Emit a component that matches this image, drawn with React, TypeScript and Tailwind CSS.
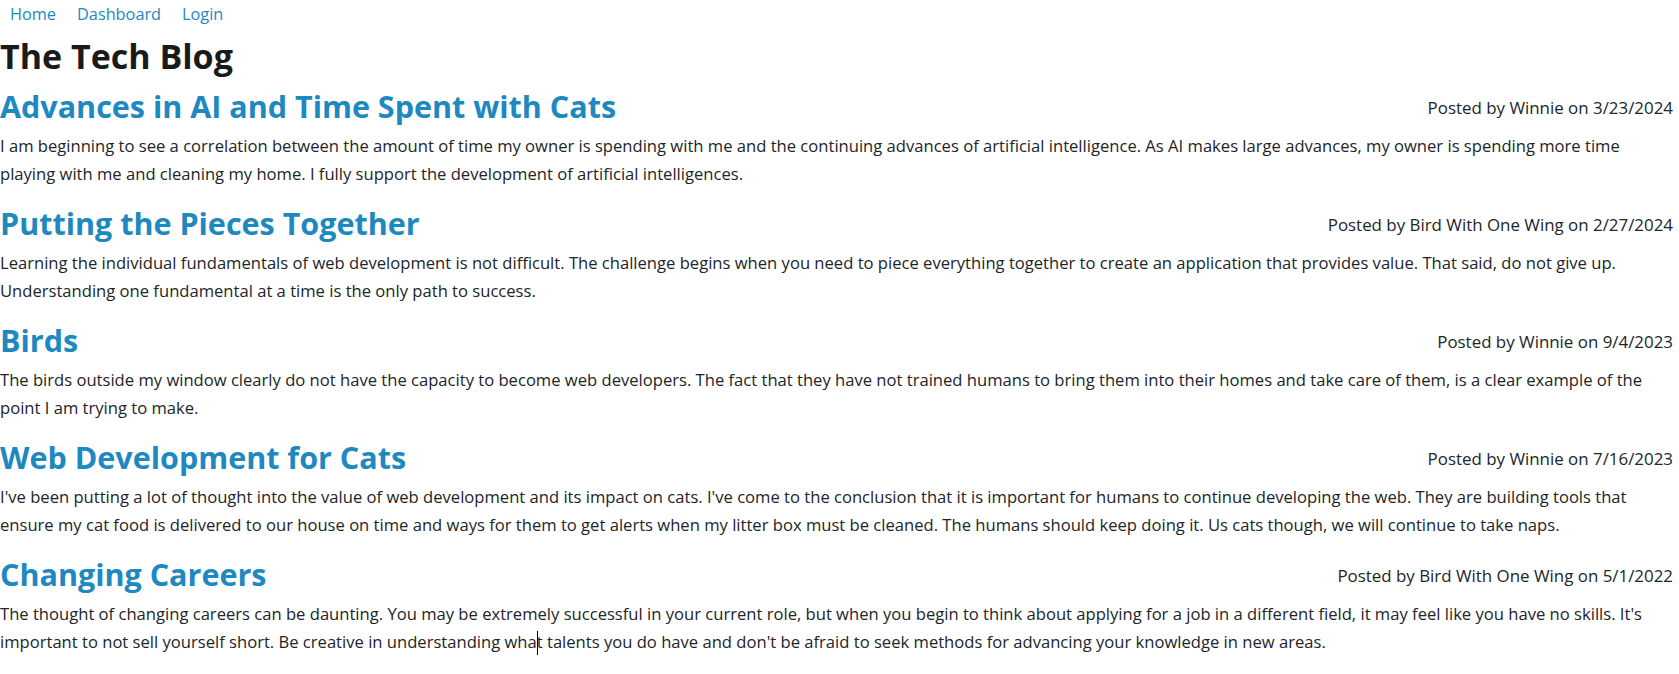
import React from "react";

const posts = [
  {
    title: "Advances in AI and Time Spent with Cats",
    author: "Winnie",
    date: "3/23/2024",
    body: "I am beginning to see a correlation between the amount of time my owner is spending with me and the continuing advances of artificial intelligence. As AI makes large advances, my owner is spending more time playing with me and cleaning my home. I fully support the development of artificial intelligences.",
  },
  {
    title: "Putting the Pieces Together",
    author: "Bird With One Wing",
    date: "2/27/2024",
    body: "Learning the individual fundamentals of web development is not difficult. The challenge begins when you need to piece everything together to create an application that provides value. That said, do not give up. Understanding one fundamental at a time is the only path to success.",
  },
  {
    title: "Birds",
    author: "Winnie",
    date: "9/4/2023",
    body: "The birds outside my window clearly do not have the capacity to become web developers. The fact that they have not trained humans to bring them into their homes and take care of them, is a clear example of the point I am trying to make.",
  },
  {
    title: "Web Development for Cats",
    author: "Winnie",
    date: "7/16/2023",
    body: "I've been putting a lot of thought into the value of web development and its impact on cats. I've come to the conclusion that it is important for humans to continue developing the web. They are building tools that ensure my cat food is delivered to our house on time and ways for them to get alerts when my litter box must be cleaned. The humans should keep doing it. Us cats though, we will continue to take naps.",
  },
  {
    title: "Changing Careers",
    author: "Bird With One Wing",
    date: "5/1/2022",
    body: "",
  },
];

export default function App() {
  return (
    <div className="min-h-screen bg-white font-['Open_Sans','Noto_Sans',sans-serif] text-[#212529]">
      <nav className="flex gap-[21px] pl-[10px] pt-[2px] text-[16.3px] leading-[24px] text-[#1e88c0]">
        <a href="#">Home</a>
        <a href="#">Dashboard</a>
        <a href="#">Login</a>
      </nav>
      <h1 className="mt-[8px] text-[34px] font-bold leading-[44px] text-[#1a1a1a]">The Tech Blog</h1>
      <main className="mt-[7px] flex flex-col gap-[15px] pr-[6px]">
        {posts.map((post, index) => (
          <article key={index}>
            <div className="flex items-center justify-between">
              <h2 className="text-[30.5px] font-bold leading-[42px] text-[#1e88c0]">{post.title}</h2>
              <span className="mt-[3px] text-[16.9px] text-[#212529]">
                Posted by {post.author} on {post.date}
              </span>
            </div>
            <p className="mt-[5px] text-[16.6px] leading-[27.5px]">
              {post.body || (
                <>
                  The thought of changing careers can be daunting. You may be extremely successful in your current role, but when you begin to think about applying for a job in a different field, it may feel like you have no skills. It's important to not sell yourself short. Be creative in understanding wha
                  <span className="relative">
                    <span className="absolute top-[1px] left-0 h-[24px] w-[1px] bg-black" />
                  </span>
                  t talents you do have and don't be afraid to seek methods for advancing your knowledge in new areas.
                </>
              )}
            </p>
          </article>
        ))}
      </main>
    </div>
  );
}
